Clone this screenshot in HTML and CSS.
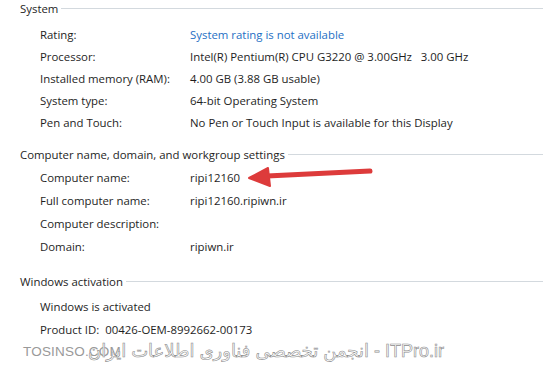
FILE: index.html
```html
<!DOCTYPE html>
<html lang="en">
<head>
    <meta charset="UTF-8">
    <title>System</title>
    <link rel="stylesheet" href="styles.css">
</head>
<body>
    <div class="panel">
        <section class="group group-system">
            <div class="group-title"><span>System</span></div>
            <div class="row"><span class="label">Rating:</span><span class="value link">System rating is not available</span></div>
            <div class="row"><span class="label">Processor:</span><span class="value">Intel(R) Pentium(R) CPU G3220 @ 3.00GHz &nbsp; 3.00 GHz</span></div>
            <div class="row"><span class="label">Installed memory (RAM):</span><span class="value">4.00 GB (3.88 GB usable)</span></div>
            <div class="row"><span class="label">System type:</span><span class="value">64-bit Operating System</span></div>
            <div class="row"><span class="label">Pen and Touch:</span><span class="value">No Pen or Touch Input is available for this Display</span></div>
        </section>

        <section class="group group-name">
            <div class="group-title"><span>Computer name, domain, and workgroup settings</span></div>
            <div class="row"><span class="label">Computer name:</span><span class="value">ripi12160</span></div>
            <div class="row"><span class="label">Full computer name:</span><span class="value">ripi12160.ripiwn.ir</span></div>
            <div class="row"><span class="label">Computer description:</span><span class="value"></span></div>
            <div class="row"><span class="label">Domain:</span><span class="value">ripiwn.ir</span></div>
        </section>

        <section class="group group-activation">
            <div class="group-title"><span>Windows activation</span></div>
            <div class="row"><span class="label">Windows is activated</span></div>
            <div class="row"><span class="label">Product ID:&nbsp; 00426-OEM-8992662-00173</span></div>
        </section>
    </div>

    <!-- red arrow pointing at the computer name -->
    <svg class="arrow" width="130" height="26" viewBox="0 0 130 26">
        <path d="M20 12 L123 7" stroke="#dd3b3b" stroke-width="5" stroke-linecap="round" fill="none"/>
        <path d="M2 14 L21 4 L23 22 Z" fill="#dd3b3b" stroke="#dd3b3b" stroke-width="2" stroke-linejoin="round"/>
    </svg>

    <div class="watermark">
        <span class="wm-left">TOSINSO.COM</span>
        <span class="wm-right">انجمن تخصصی فناوری اطلاعات ایران - ITPro.ir</span>
    </div>
</body>
</html>
```

FILE: styles.css
```css
* {
    box-sizing: border-box;
    margin: 0;
    padding: 0;
}

body {
    font-family: 'Open Sans', 'Noto Sans', sans-serif;
    font-size: 11.4px;
    color: #1e1e1e;
    background-color: #fff;
    width: 543px;
    height: 372px;
    overflow: hidden;
    position: relative;
}

.panel {
    padding-left: 20px;
    margin-top: -1px;
}

.group-title {
    display: flex;
    align-items: center;
    height: 18px;
    color: #1e1e1e;
}

.group-title::after {
    content: "";
    flex: 1;
    border-top: 1px solid #d3d9de;
    margin-left: 3px;
    margin-top: 1px;
}

.row {
    display: flex;
    align-items: center;
    height: 22px;
    padding-left: 20px;
    white-space: nowrap;
}

.label {
    width: 150px;
    flex-shrink: 0;
}

.value.link {
    color: #1e6fc4;
}

.group-system .group-title {
    margin-bottom: 6px;
}

.group-name {
    margin-top: 12px;
}

.group-name .group-title {
    margin-bottom: 3px;
}

.group-name .row,
.group-activation .row {
    height: 23px;
}

.group-activation {
    margin-top: 14px;
}

.group-activation .group-title {
    margin-bottom: 5px;
}

.arrow {
    position: absolute;
    left: 247px;
    top: 164px;
}

.watermark {
    position: absolute;
    left: 0;
    top: 342px;
    width: 100%;
    height: 22px;
    color: #999;
    font-family: 'Liberation Sans', 'DejaVu Sans', sans-serif;
}

.wm-left {
    position: absolute;
    left: 23px;
    top: 2px;
    font-size: 13.5px;
    letter-spacing: 0.2px;
}

.wm-right {
    position: absolute;
    left: 88px;
    top: -2px;
    font-size: 18px;
    color: #fff;
    -webkit-text-stroke: 0.6px #8c8c8c;
    white-space: nowrap;
}
```
